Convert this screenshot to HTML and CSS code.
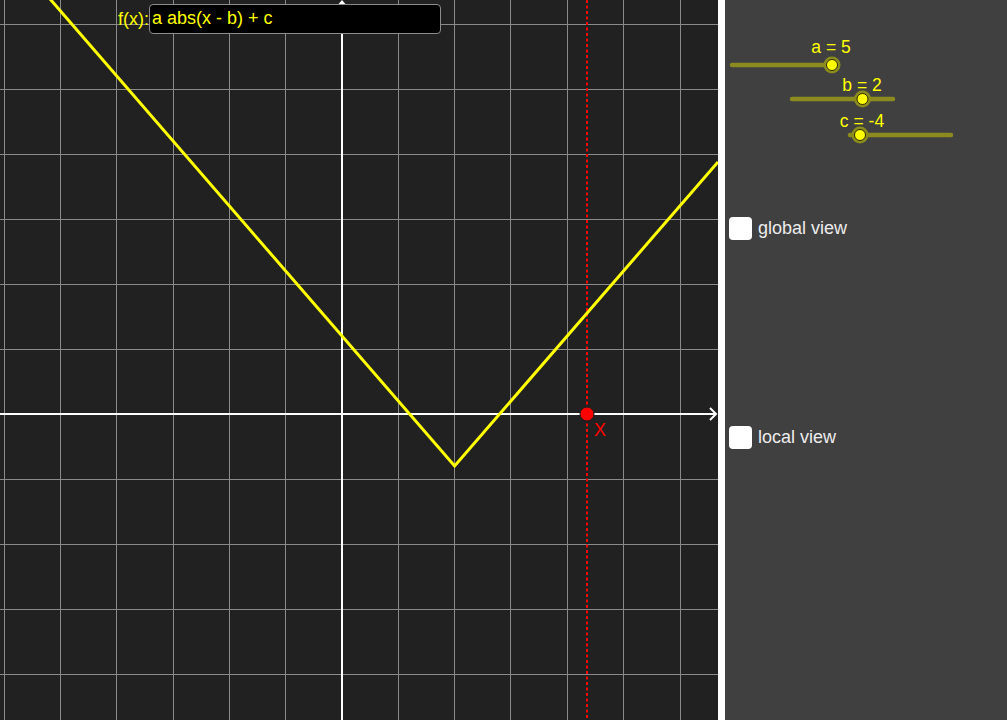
FILE: index.html
```html
<!DOCTYPE html>
<html>
<head>
<meta charset="utf-8">
<link rel="stylesheet" href="styles.css">
</head>
<body>
<div class="app">
  <div class="graphics">
    <svg class="plot" width="718" height="720" viewBox="0 0 718 720">
      <rect x="0" y="0" width="718" height="720" fill="#212121"/>
      <g stroke="#8a8a8a" stroke-width="1">
        <line x1="4.5" y1="0" x2="4.5" y2="720"/>
        <line x1="60.5" y1="0" x2="60.5" y2="720"/>
        <line x1="116.5" y1="0" x2="116.5" y2="720"/>
        <line x1="173.5" y1="0" x2="173.5" y2="720"/>
        <line x1="229.5" y1="0" x2="229.5" y2="720"/>
        <line x1="285.5" y1="0" x2="285.5" y2="720"/>
        <line x1="398.5" y1="0" x2="398.5" y2="720"/>
        <line x1="454.5" y1="0" x2="454.5" y2="720"/>
        <line x1="510.5" y1="0" x2="510.5" y2="720"/>
        <line x1="567.5" y1="0" x2="567.5" y2="720"/>
        <line x1="623.5" y1="0" x2="623.5" y2="720"/>
        <line x1="680.5" y1="0" x2="680.5" y2="720"/>
        <line x1="0" y1="24.5" x2="718" y2="24.5"/>
        <line x1="0" y1="89.5" x2="718" y2="89.5"/>
        <line x1="0" y1="154.5" x2="718" y2="154.5"/>
        <line x1="0" y1="219.5" x2="718" y2="219.5"/>
        <line x1="0" y1="284.5" x2="718" y2="284.5"/>
        <line x1="0" y1="349.5" x2="718" y2="349.5"/>
        <line x1="0" y1="479.5" x2="718" y2="479.5"/>
        <line x1="0" y1="544.5" x2="718" y2="544.5"/>
        <line x1="0" y1="609.5" x2="718" y2="609.5"/>
        <line x1="0" y1="674.5" x2="718" y2="674.5"/>
      </g>
      <g stroke="#ffffff" stroke-width="2" fill="none">
        <line x1="0" y1="414" x2="715" y2="414"/>
        <polyline points="710,408 716,414 710,420" stroke-linejoin="miter"/>
        <line x1="342" y1="1" x2="342" y2="720"/>
      </g>
      <polygon points="336,7 342,0 348,7" fill="#ffffff"/>
      <line x1="587" y1="0" x2="587" y2="720" stroke="#ff0000" stroke-width="2" stroke-dasharray="3 2.5"/>
      <polyline points="0,-58.8 454.6,466 718,161.9" fill="none" stroke="#ffff00" stroke-width="3" stroke-linejoin="miter"/>
      <circle cx="587" cy="414" r="7" fill="#ff0000" stroke="#1a1a1a" stroke-width="1"/>
      <text x="594" y="436" class="ptlabel">X</text>
    </svg>
    <div class="inputbar">
      <span class="fname">f(x):</span>
      <div class="inputbox">a abs(x - b) + c</div>
    </div>
  </div>
  <div class="divider"></div>
  <div class="sidebar">
    <svg class="sliders" width="280" height="150" viewBox="0 0 280 150">
      <g stroke="#8b8b1f" stroke-width="4.5" stroke-linecap="round">
        <line x1="7" y1="65" x2="107" y2="65"/>
        <line x1="67" y1="99" x2="168" y2="99"/>
        <line x1="125" y1="135" x2="226" y2="135"/>
      </g>
      <g>
        <circle cx="107" cy="65" r="8.5" fill="#8b8b1f"/>
        <circle cx="107" cy="65" r="5.5" fill="#ffff00" stroke="#2a2a00" stroke-width="1"/>
        <circle cx="137.5" cy="99" r="8.5" fill="#8b8b1f"/>
        <circle cx="137.5" cy="99" r="5.5" fill="#ffff00" stroke="#2a2a00" stroke-width="1"/>
        <circle cx="135" cy="135" r="8.5" fill="#8b8b1f"/>
        <circle cx="135" cy="135" r="5.5" fill="#ffff00" stroke="#2a2a00" stroke-width="1"/>
      </g>
      <text x="106" y="53" class="slabel">a = 5</text>
      <text x="137" y="91" class="slabel">b = 2</text>
      <text x="137" y="127" class="slabel">c = -4</text>
    </svg>
    <label class="check check-global"><span class="box"></span><span class="ctext">global view</span></label>
    <label class="check check-local"><span class="box"></span><span class="ctext">local view</span></label>
  </div>
</div>
</body>
</html>
```

FILE: styles.css
```css
html, body {
  margin: 0;
  padding: 0;
  background: #404040;
  overflow: hidden;
}
.app {
  display: flex;
  width: 1007px;
  height: 720px;
  font-family: "Liberation Sans", Arial, sans-serif;
}
.graphics {
  position: relative;
  width: 718px;
  height: 720px;
  flex: none;
}
.plot {
  display: block;
}
.ptlabel {
  fill: #ff0000;
  font-family: "Liberation Sans", Arial, sans-serif;
  font-size: 18px;
}
.inputbar {
  position: absolute;
  left: 118px;
  top: 4px;
  display: flex;
  align-items: center;
}
.fname {
  color: #ffff00;
  font-size: 18px;
  margin-right: 0;
}
.inputbox {
  box-sizing: border-box;
  width: 292px;
  height: 30px;
  background: #000000;
  border: 1.5px solid #8c8c8c;
  border-radius: 4px;
  color: #ffff00;
  font-size: 18px;
  line-height: 27px;
  padding-left: 2px;
}
.divider {
  width: 7px;
  height: 720px;
  background: #ffffff;
  flex: none;
}
.sidebar {
  flex: 1;
  height: 720px;
  background: #404040;
  display: flex;
  flex-direction: column;
}
.sliders {
  display: block;
  margin-bottom: 66px;
}
.slabel {
  fill: #ffff00;
  font-family: "Liberation Sans", Arial, sans-serif;
  font-size: 17.5px;
  text-anchor: middle;
}
.check {
  display: flex;
  align-items: center;
  height: 24px;
  padding-left: 4px;
  gap: 6px;
}
.check-local {
  margin-top: 185px;
}
.box {
  width: 23px;
  height: 23px;
  background: #ffffff;
  border-radius: 4px;
  flex: none;
}
.ctext {
  color: #ececec;
  font-size: 18px;
}
```
